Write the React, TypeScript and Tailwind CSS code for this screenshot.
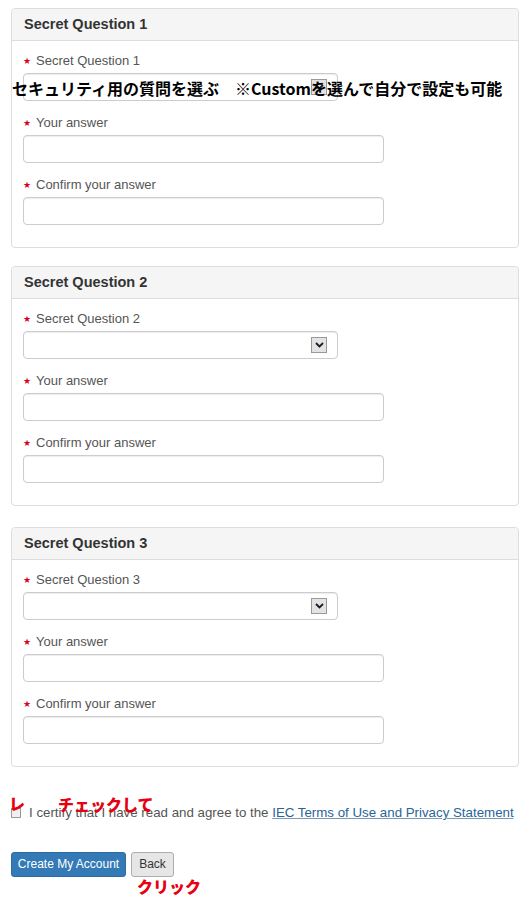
import React from "react";

function Star() {
  return <span className="mr-[5px] inline-block text-[9px] leading-none text-[#d9001b]">★</span>;
}

function Field({ label, select }: { label: string; select?: boolean }) {
  return (
    <div className="flex flex-col">
      <label className="flex h-[18px] items-center text-[13px] text-[#555]">
        <Star />
        {label}
      </label>
      {select ? (
        <div className="mt-[3px] flex h-[28px] w-[315px] items-center justify-end rounded-[4px] border border-[#ccc] bg-white pr-[10px] shadow-[inset_0_1px_1px_rgba(0,0,0,0.075)]">
          <div className="flex h-[16px] w-[16px] items-center justify-center border border-[#999] bg-[#e3e3e3]">
            <svg width="9" height="6" viewBox="0 0 9 6">
              <path d="M1 1 L4.5 4.5 L8 1" fill="none" stroke="#1a1a2e" strokeWidth="1.8" />
            </svg>
          </div>
        </div>
      ) : (
        <div className="mt-[3px] h-[28px] w-[361px] rounded-[4px] border border-[#ccc] bg-white shadow-[inset_0_1px_1px_rgba(0,0,0,0.075)]" />
      )}
    </div>
  );
}

function Panel({ n }: { n: number }) {
  return (
    <div className="w-[508px] rounded-[4px] border border-[#ddd] bg-white">
      <div className="flex h-[32px] items-center rounded-t-[4px] border-b border-[#ddd] bg-[#f5f5f5] px-[12px] text-[14.5px] font-bold text-[#333]">
        Secret Question {n}
      </div>
      <div className="flex flex-col gap-[13px] px-[11px] pb-[22px] pt-[11px]">
        <Field label={`Secret Question ${n}`} select />
        <Field label="Your answer" />
        <Field label="Confirm your answer" />
      </div>
    </div>
  );
}

export default function App() {
  return (
    <div className="relative min-h-[910px] w-[529px] bg-white pl-[11px] pt-[8px] font-['Liberation_Sans',Arial,sans-serif]">
      <div className="flex flex-col">
        <div className="mb-[18px]">
          <Panel n={1} />
        </div>
        <div className="mb-[21px]">
          <Panel n={2} />
        </div>
        <Panel n={3} />
      </div>

      <div className="mt-[36px] flex items-center text-[13.3px] text-[#555]">
        <span className="mr-[8px] inline-block h-[10px] w-[10px] border border-[#999] bg-[#f0f0f0]" />
        <span>
          I certify that I have read and agree to the{" "}
          <a className="text-[#2a6496] underline decoration-[#7a9ab8]">IEC Terms of Use and Privacy Statement</a>
        </span>
      </div>

      <div className="mt-[29px] flex gap-[5px]">
        <button className="h-[25px] w-[115px] rounded-[3px] border border-[#2e6da4] bg-[#337ab7] text-[12px] text-white">
          Create My Account
        </button>
        <button className="h-[25px] w-[43px] rounded-[3px] border border-[#adadad] bg-[#e6e6e6] text-[12px] text-[#333]">
          Back
        </button>
      </div>

      {/* annotations */}
      <div className="absolute left-[12px] top-[78px] whitespace-nowrap font-['Noto_Sans_CJK_JP',sans-serif] text-[16px] font-bold leading-[20px] text-black">
        セキュリティ用の質問を選ぶ　※Customを選んで自分で設定も可能
      </div>
      <div className="absolute left-[9px] top-[794px] font-['Noto_Sans_CJK_JP',sans-serif] text-[16px] font-black leading-[18px] text-[#e60012]">
        レ
      </div>
      <div className="absolute left-[58px] top-[795px] font-['Noto_Sans_CJK_JP',sans-serif] text-[16px] font-black leading-[18px] text-[#e60012]">
        チェックして
      </div>
      <div className="absolute left-[137px] top-[877px] font-['Noto_Sans_CJK_JP',sans-serif] text-[16px] font-black leading-[18px] text-[#e60012]">
        クリック
      </div>
    </div>
  );
}
